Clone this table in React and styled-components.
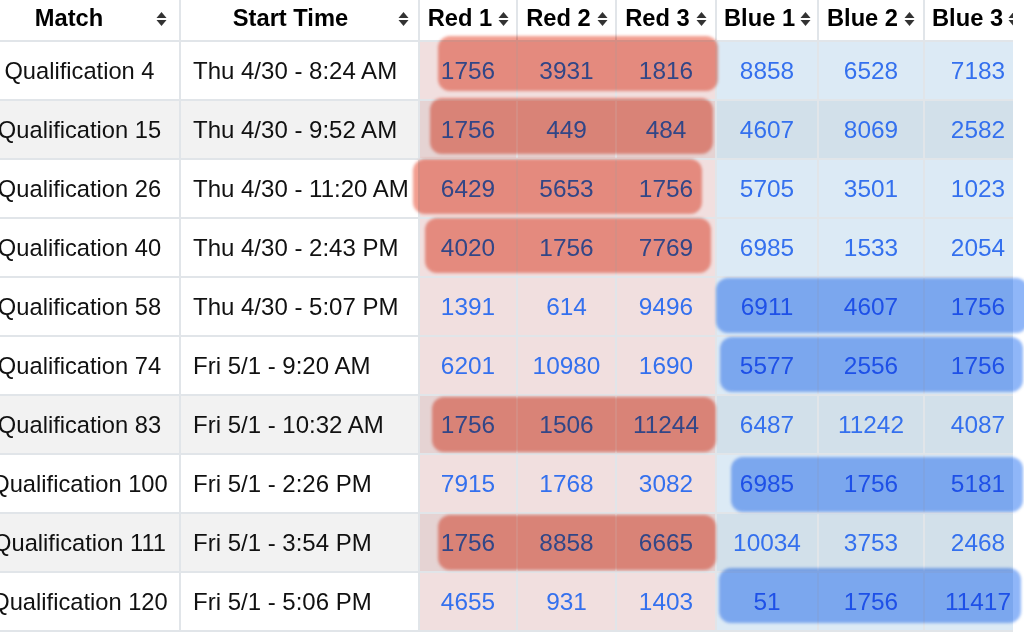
import React from 'react';
import styled, { createGlobalStyle } from 'styled-components';

const GlobalStyle = createGlobalStyle`
  html, body { margin: 0; padding: 0; background: #ffffff; }
  body { font-family: "Liberation Sans", Arial, Helvetica, sans-serif; color: #111; }
`;

const LINE = '#e1e5e9';

const BG = {
  plain: ['#ffffff', '#f2f2f2'],
  red: ['#f1dfdf', '#e5d3d3'],
  blue: ['#dceaf5', '#d2e0ea'],
};

const SIZE = { match: '23.7px', time: '24px', num: '24.4px' };

const columns = [
  { label: 'Match', width: 200, kind: 'plain', pr: 12 },
  { label: 'Start Time', width: 239, kind: 'plain', pr: 9 },
  { label: 'Red 1', width: 98, kind: 'red', pr: 7 },
  { label: 'Red 2', width: 99, kind: 'red', pr: 7 },
  { label: 'Red 3', width: 100, kind: 'red', pr: 8 },
  { label: 'Blue 1', width: 102, kind: 'blue', pr: 6 },
  { label: 'Blue 2', width: 106, kind: 'blue', pr: 8 },
  { label: 'Blue 3', width: 108, kind: 'blue', pr: 16 },
];

const matches = [
  { match: 'Qualification 4', time: 'Thu 4/30 - 8:24 AM', red: [1756, 3931, 1816], blue: [8858, 6528, 7183], striped: false },
  { match: 'Qualification 15', time: 'Thu 4/30 - 9:52 AM', red: [1756, 449, 484], blue: [4607, 8069, 2582], striped: true },
  { match: 'Qualification 26', time: 'Thu 4/30 - 11:20 AM', red: [6429, 5653, 1756], blue: [5705, 3501, 1023], striped: false },
  { match: 'Qualification 40', time: 'Thu 4/30 - 2:43 PM', red: [4020, 1756, 7769], blue: [6985, 1533, 2054], striped: false },
  { match: 'Qualification 58', time: 'Thu 4/30 - 5:07 PM', red: [1391, 614, 9496], blue: [6911, 4607, 1756], striped: false },
  { match: 'Qualification 74', time: 'Fri 5/1 - 9:20 AM', red: [6201, 10980, 1690], blue: [5577, 2556, 1756], striped: false },
  { match: 'Qualification 83', time: 'Fri 5/1 - 10:32 AM', red: [1756, 1506, 11244], blue: [6487, 11242, 4087], striped: true },
  { match: 'Qualification 100', time: 'Fri 5/1 - 2:26 PM', red: [7915, 1768, 3082], blue: [6985, 1756, 5181], striped: false },
  { match: 'Qualification 111', time: 'Fri 5/1 - 3:54 PM', red: [1756, 8858, 6665], blue: [10034, 3753, 2468], striped: true },
  { match: 'Qualification 120', time: 'Fri 5/1 - 5:06 PM', red: [4655, 931, 1403], blue: [51, 1756, 11417], striped: false },
];

/* hand-drawn highlighter strokes over the alliance that contains team 1756 */
const marks = [
  { tone: 'red', x: 438, y: 36, w: 280, h: 55 },
  { tone: 'red', x: 430, y: 98, w: 283, h: 56 },
  { tone: 'red', x: 413, y: 159, w: 289, h: 55 },
  { tone: 'red', x: 425, y: 218, w: 286, h: 55 },
  { tone: 'blue', x: 716, y: 278, w: 312, h: 55 },
  { tone: 'blue', x: 720, y: 337, w: 303, h: 55 },
  { tone: 'red', x: 432, y: 397, w: 284, h: 55 },
  { tone: 'blue', x: 731, y: 457, w: 292, h: 55 },
  { tone: 'red', x: 438, y: 515, w: 278, h: 55 },
  { tone: 'blue', x: 719, y: 568, w: 302, h: 55 },
];

const Frame = styled.div`
  position: relative;
  width: 1024px;
  height: 642px;
  overflow: hidden;
  background: #ffffff;
`;

const Viewport = styled.div`
  width: 1013px;
  overflow: hidden;
`;

const Table = styled.table`
  margin-left: -20px;
  width: 1052px;
  table-layout: fixed;
  border-collapse: collapse;
`;

const Th = styled.th`
  height: 37px;
  padding: 0 ${(p) => p.$pr}px 3px 7px;
  border-right: 2px solid ${LINE};
  border-bottom: 2px solid ${LINE};
  background: #ffffff;
  color: #000;
  font-size: 23.7px;
  font-weight: 700;
  white-space: nowrap;
  vertical-align: middle;
`;

const HeadInner = styled.div`
  display: flex;
  align-items: center;
  gap: 5px;
`;

const Label = styled.span`
  flex: 1;
  text-align: center;
  white-space: nowrap;
`;

const SortSvg = styled.svg`
  flex: 0 0 auto;
  width: 11px;
  height: 16px;
  fill: #333333;
`;

const SortIcon = () => (
  <SortSvg viewBox="0 0 11 16">
    <path d="M5.5 1 L10.5 7 H0.5 Z" />
    <path d="M0.5 9 H10.5 L5.5 15 Z" />
  </SortSvg>
);

const Td = styled.td`
  height: 57px;
  padding: 0 ${(p) => (p.$align === 'left' ? '12px' : '2px')};
  border: 2px solid ${LINE};
  border-left: none;
  background: ${(p) => BG[p.$kind][p.$striped ? 1 : 0]};
  text-align: ${(p) => p.$align};
  vertical-align: middle;
  line-height: 28px;
  white-space: nowrap;
  font-size: ${(p) => p.$size};
  color: ${(p) => (p.$kind === 'plain' ? '#111111' : '#3470ee')};
`;

const Mark = styled.div`
  position: absolute;
  border-radius: 12px;
  background: ${(p) => (p.$tone === 'red' ? '#f29e90' : '#8fb6f8')};
  mix-blend-mode: multiply;
  filter: blur(1.6px);
  pointer-events: none;
`;

export default function App() {
  return (
    <>
      <GlobalStyle />
      <Frame>
        <Viewport>
          <Table>
            <colgroup>
              {columns.map((c) => (
                <col key={c.label} style={{ width: c.width }} />
              ))}
            </colgroup>
            <thead>
              <tr>
                {columns.map((c) => (
                  <Th key={c.label} $pr={c.pr}>
                    <HeadInner>
                      <Label>{c.label}</Label>
                      <SortIcon />
                    </HeadInner>
                  </Th>
                ))}
              </tr>
            </thead>
            <tbody>
              {matches.map((m) => (
                <tr key={m.match}>
                  <Td $kind="plain" $align="center" $size={SIZE.match} $striped={m.striped}>{m.match}</Td>
                  <Td $kind="plain" $align="left" $size={SIZE.time} $striped={m.striped}>{m.time}</Td>
                  {m.red.map((t, i) => (
                    <Td key={'r' + i} $kind="red" $align="center" $size={SIZE.num} $striped={m.striped}>{t}</Td>
                  ))}
                  {m.blue.map((t, i) => (
                    <Td key={'b' + i} $kind="blue" $align="center" $size={SIZE.num} $striped={m.striped}>{t}</Td>
                  ))}
                </tr>
              ))}
            </tbody>
          </Table>
        </Viewport>
        {marks.map((k, i) => (
          <Mark key={i} $tone={k.tone} style={{ left: k.x, top: k.y, width: k.w, height: k.h }} />
        ))}
      </Frame>
    </>
  );
}
